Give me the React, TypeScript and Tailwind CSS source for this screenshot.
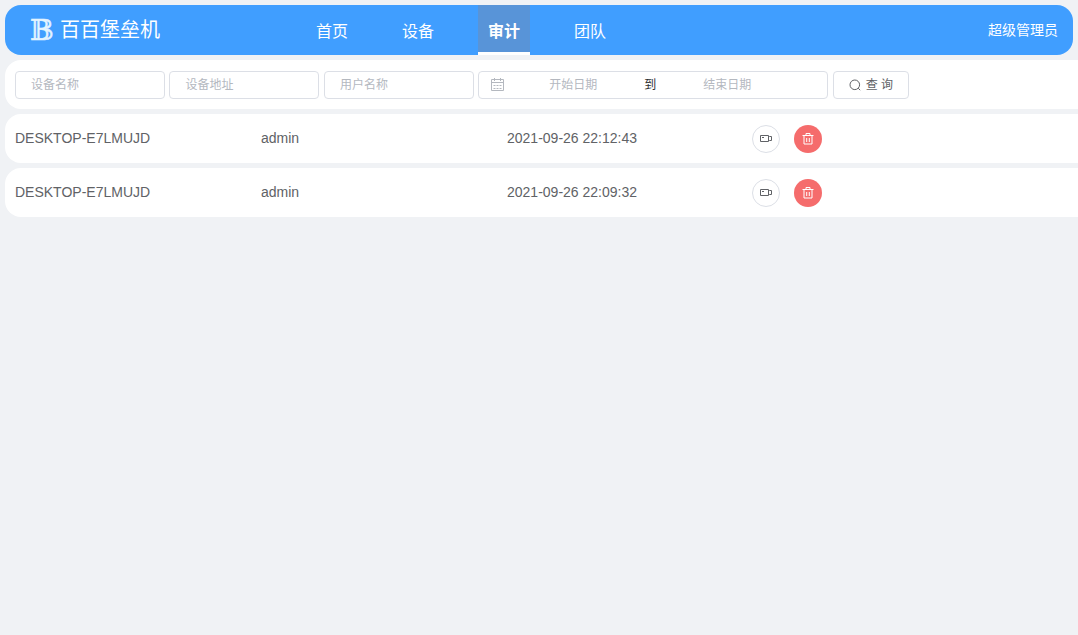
const menus = ["首页", "设备", "审计", "团队"]

const records = [
    { id: 1, device: "DESKTOP-E7LMUJD", user: "admin", time: "2021-09-26 22:12:43" },
    { id: 2, device: "DESKTOP-E7LMUJD", user: "admin", time: "2021-09-26 22:09:32" },
]

function Logo() {
    return (
        <svg className="h-10 w-7" viewBox="0 0 28 40" aria-hidden="true">
            <text x="1" y="30" fontSize="28" fontFamily="'DejaVu Serif', 'DejaVu Sans', serif" fill="#e3f4ff" stroke="#e3f4ff" strokeWidth="0.5">𝔹</text>
        </svg>
    )
}

function CalendarIcon() {
    return (
        <svg className="h-3.5 w-3.5 shrink-0" viewBox="0 0 14 14" fill="none" stroke="#b4b8bf" aria-hidden="true">
            <path d="M.5 1.5h12v11h-12zM.5 4.5h12M3.5 0v3M9.5 0v3" />
            <path d="M2.500 7.500h8M2.500 10.500h8" strokeDasharray="2 1" />
        </svg>
    )
}

function SearchIcon() {
    return (
        <svg className="h-3 w-3" viewBox="0 0 12 12" fill="none" stroke="#606266" aria-hidden="true">
            <circle cx="5.8" cy="5.8" r="4.8" />
            <path d="M9.2 9.2l2 2" />
        </svg>
    )
}

function VideoIcon() {
    return (
        <svg className="h-3 w-3" viewBox="0 0 12 12" fill="none" stroke="#606266" aria-hidden="true">
            <path d="M.5 2.500h8v6h-8zM8.500 4.500l1-1h2v4h-2l-1-1M2 4.500h2" />
        </svg>
    )
}

function TrashIcon() {
    return (
        <svg className="h-3 w-3" viewBox="0 0 12 12" fill="none" stroke="#fff" aria-hidden="true">
            <path d="M.5 2.500h11M4 2.500v-2h4v2M2 2.500v8.500h8v-8.500M4.700 5v4M7.300 5v4" />
        </svg>
    )
}

function FilterInput({ label }: { label: string }) {
    return (
        <input
            type="text"
            aria-label={label}
            placeholder={label}
            className="h-7 w-[150px] rounded border border-[#dcdfe6] bg-white px-[15px] align-middle text-xs text-[#606266] outline-none placeholder:text-[#b4b8bf]"
        />
    )
}

export default function App() {
    return (
        <div className="min-h-screen overflow-x-hidden bg-[#f0f2f5] pt-[5px] pl-[5px] font-['Liberation_Sans','Noto_Sans_CJK_SC',sans-serif] text-[#606266]">
            <header className="mr-[5px] flex h-[50px] items-center rounded-2xl bg-[#409eff] pr-[15px] pl-6 text-white">
                <div className="flex w-[277px] items-center gap-[3px]">
                    <Logo />
                    <h1 className="text-xl leading-7">百百堡垒机</h1>
                </div>
                <nav className="flex h-full gap-[34px]">
                    {menus.map((menu) => (
                        <a
                            key={menu}
                            href="#"
                            className={
                                menu === "审计"
                                    ? "flex items-center border-b-3 border-white bg-[#5894d8] px-2.5 pt-1.5 text-base font-bold"
                                    : "flex items-center border-b-3 border-transparent px-2.5 pt-1.5 text-base"
                            }
                        >
                            {menu}
                        </a>
                    ))}
                </nav>
                <a href="#" className="ml-auto text-sm">超级管理员</a>
            </header>

            <form className="mt-[5px] h-[49px] rounded-l-2xl bg-white pt-[11px] pl-2.5 text-base whitespace-nowrap">
                <FilterInput label="设备名称" />{" "}
                <FilterInput label="设备地址" />{" "}
                <FilterInput label="用户名称" />{" "}
                <div className="inline-flex h-7 w-[350px] items-center rounded border border-[#dcdfe6] px-3 align-middle text-xs">
                    <CalendarIcon />
                    <input type="text" aria-label="开始日期" placeholder="开始日期" className="w-[136px] text-center outline-none placeholder:text-[#b4b8bf]" />
                    <span className="w-[18px] text-center text-[#303133]">到</span>
                    <input type="text" aria-label="结束日期" placeholder="结束日期" className="w-[136px] text-center outline-none placeholder:text-[#b4b8bf]" />
                </div>{" "}
                <button type="button" className="inline-flex h-7 w-[76px] items-center justify-center gap-[5px] rounded border border-[#dcdfe6] bg-white align-middle text-xs">
                    <SearchIcon />
                    <span>查 询</span>
                </button>
            </form>

            <table className="w-full table-fixed border-separate border-spacing-x-0 border-spacing-y-[5px] text-sm">
                <tbody>
                    {records.map((record) => (
                        <tr key={record.id} className="h-[49px] bg-white">
                            <td className="w-[246px] rounded-l-2xl pb-0.5 pl-2.5">{record.device}</td>
                            <td className="w-[246px] pb-0.5 pl-2.5">{record.user}</td>
                            <td className="w-[246px] pb-0.5 pl-2.5">{record.time}</td>
                            <td className="pl-[9px]">
                                <div className="flex gap-3.5">
                                    <button type="button" aria-label="播放" className="flex h-7 w-7 items-center justify-center rounded-full border border-[#dcdfe6] bg-white">
                                        <VideoIcon />
                                    </button>
                                    <button type="button" aria-label="删除" className="flex h-7 w-7 items-center justify-center rounded-full bg-[#f56c6c]">
                                        <TrashIcon />
                                    </button>
                                </div>
                            </td>
                        </tr>
                    ))}
                </tbody>
            </table>
        </div>
    )
}
